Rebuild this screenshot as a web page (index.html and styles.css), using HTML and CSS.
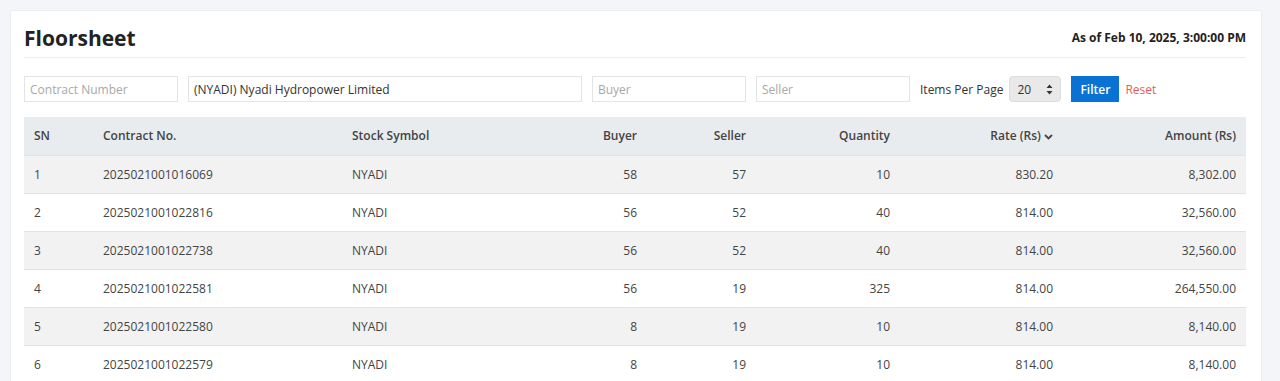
FILE: index.html
```html
<!DOCTYPE html>
<html lang="en">
<head>
    <meta charset="UTF-8">
    <meta name="viewport" content="width=device-width, initial-scale=1.0">
    <title>Floorsheet</title>
    <link rel="stylesheet" href="styles.css">
</head>
<body>
    <div class="card">
        <div class="card-header">
            <h2>Floorsheet</h2>
            <span class="as-of">As of Feb 10, 2025, 3:00:00 PM</span>
        </div>

        <div class="filters">
            <input class="input input-sm" type="text" placeholder="Contract Number">
            <input class="input input-lg" type="text" value="(NYADI) Nyadi Hydropower Limited">
            <input class="input input-sm" type="text" placeholder="Buyer">
            <input class="input input-sm" type="text" placeholder="Seller">
            <label class="per-page">Items Per Page</label>
            <div class="select">
                <span>20</span>
                <svg width="7" height="11" viewBox="0 0 7 11"><path d="M3.5 0.5 L6.5 4 H0.5 Z M3.5 10.5 L6.5 7 H0.5 Z" fill="#333"/></svg>
            </div>
            <button class="btn-filter">Filter</button>
            <a class="btn-reset" href="#">Reset</a>
        </div>

        <table class="floorsheet">
            <thead>
                <tr>
                    <th class="col-sn">SN</th>
                    <th class="col-contract">Contract No.</th>
                    <th class="col-symbol">Stock Symbol</th>
                    <th class="num col-buyer">Buyer</th>
                    <th class="num col-seller">Seller</th>
                    <th class="num col-qty">Quantity</th>
                    <th class="num col-rate">Rate (Rs) <svg width="9" height="6" viewBox="0 0 9 6"><path d="M1 1 L4.5 4.5 L8 1" fill="none" stroke="#444" stroke-width="1.8"/></svg></th>
                    <th class="num col-amount">Amount (Rs)</th>
                </tr>
            </thead>
            <tbody>
                <tr><td>1</td><td>2025021001016069</td><td>NYADI</td><td class="num">58</td><td class="num">57</td><td class="num">10</td><td class="num">830.20</td><td class="num">8,302.00</td></tr>
                <tr><td>2</td><td>2025021001022816</td><td>NYADI</td><td class="num">56</td><td class="num">52</td><td class="num">40</td><td class="num">814.00</td><td class="num">32,560.00</td></tr>
                <tr><td>3</td><td>2025021001022738</td><td>NYADI</td><td class="num">56</td><td class="num">52</td><td class="num">40</td><td class="num">814.00</td><td class="num">32,560.00</td></tr>
                <tr><td>4</td><td>2025021001022581</td><td>NYADI</td><td class="num">56</td><td class="num">19</td><td class="num">325</td><td class="num">814.00</td><td class="num">264,550.00</td></tr>
                <tr><td>5</td><td>2025021001022580</td><td>NYADI</td><td class="num">8</td><td class="num">19</td><td class="num">10</td><td class="num">814.00</td><td class="num">8,140.00</td></tr>
                <tr><td>6</td><td>2025021001022579</td><td>NYADI</td><td class="num">8</td><td class="num">19</td><td class="num">10</td><td class="num">814.00</td><td class="num">8,140.00</td></tr>
            </tbody>
        </table>
    </div>
</body>
</html>
```

FILE: styles.css
```css
body {
    font-family: "Open Sans", Arial, sans-serif;
    margin: 0;
    padding: 10px 18px 0 10px;
    background-color: #f4f5f8;
    color: #333;
    font-size: 12px;
}

.card {
    background-color: white;
    border: 1px solid #eceef2;
    padding: 12px 15px 0 13px;
}

.card-header {
    display: flex;
    justify-content: space-between;
    align-items: flex-end;
    padding-bottom: 4px;
    border-bottom: 1px solid #eceef0;
}

.card-header h2 {
    margin: 0;
    font-size: 21px;
    font-weight: 700;
    color: #222;
    line-height: 30px;
}

.as-of {
    font-weight: 700;
    font-size: 12px;
    color: #222;
    padding-bottom: 7px;
}

.filters {
    display: flex;
    align-items: center;
    margin-top: 18px;
    margin-bottom: 15px;
}

.input {
    box-sizing: border-box;
    height: 26px;
    border: 1px solid #e3e4e6;
    padding: 0 5px;
    font-family: inherit;
    font-size: 12px;
    color: #333;
    margin-right: 10px;
    outline: none;
}

.input::placeholder {
    color: #a8a8a8;
}

.input-sm {
    width: 154px;
}

.input-lg {
    width: 394px;
}

.per-page {
    font-size: 12px;
    margin-right: 6px;
}

.select {
    box-sizing: border-box;
    width: 52px;
    height: 26px;
    border-radius: 4px;
    background-color: #e9e9ea;
    border: 1px solid #dcdcdc;
    display: flex;
    align-items: center;
    justify-content: space-between;
    padding: 0 7px;
    margin-right: 10px;
}

.btn-filter {
    height: 26px;
    border: none;
    background-color: #0a72d3;
    color: white;
    font-family: inherit;
    font-size: 12px;
    font-weight: 600;
    padding: 0 9px;
}

.btn-reset {
    color: #ec5a5a;
    text-decoration: none;
    margin-left: 6px;
}

.floorsheet {
    width: 100%;
    border-collapse: collapse;
    table-layout: fixed;
}

.floorsheet th,
.floorsheet td {
    height: 38px;
    padding: 0 10px;
    text-align: left;
    border-bottom: 1px solid #e0e2e5;
    box-sizing: border-box;
}

.floorsheet th {
    background-color: #e9ecef;
    font-weight: 600;
    color: #444;
}

.floorsheet td {
    color: #444;
}

.floorsheet tbody tr:nth-child(odd) td {
    background-color: #f2f2f2;
}

.floorsheet .num {
    text-align: right;
}

.col-sn { width: 69px; }
.col-contract { width: 249px; }
.col-symbol { width: 205px; }
.col-buyer { width: 100px; }
.col-seller { width: 109px; }
.col-qty { width: 144px; }
.col-rate { width: 163px; }
.col-amount { width: 183px; }
```
